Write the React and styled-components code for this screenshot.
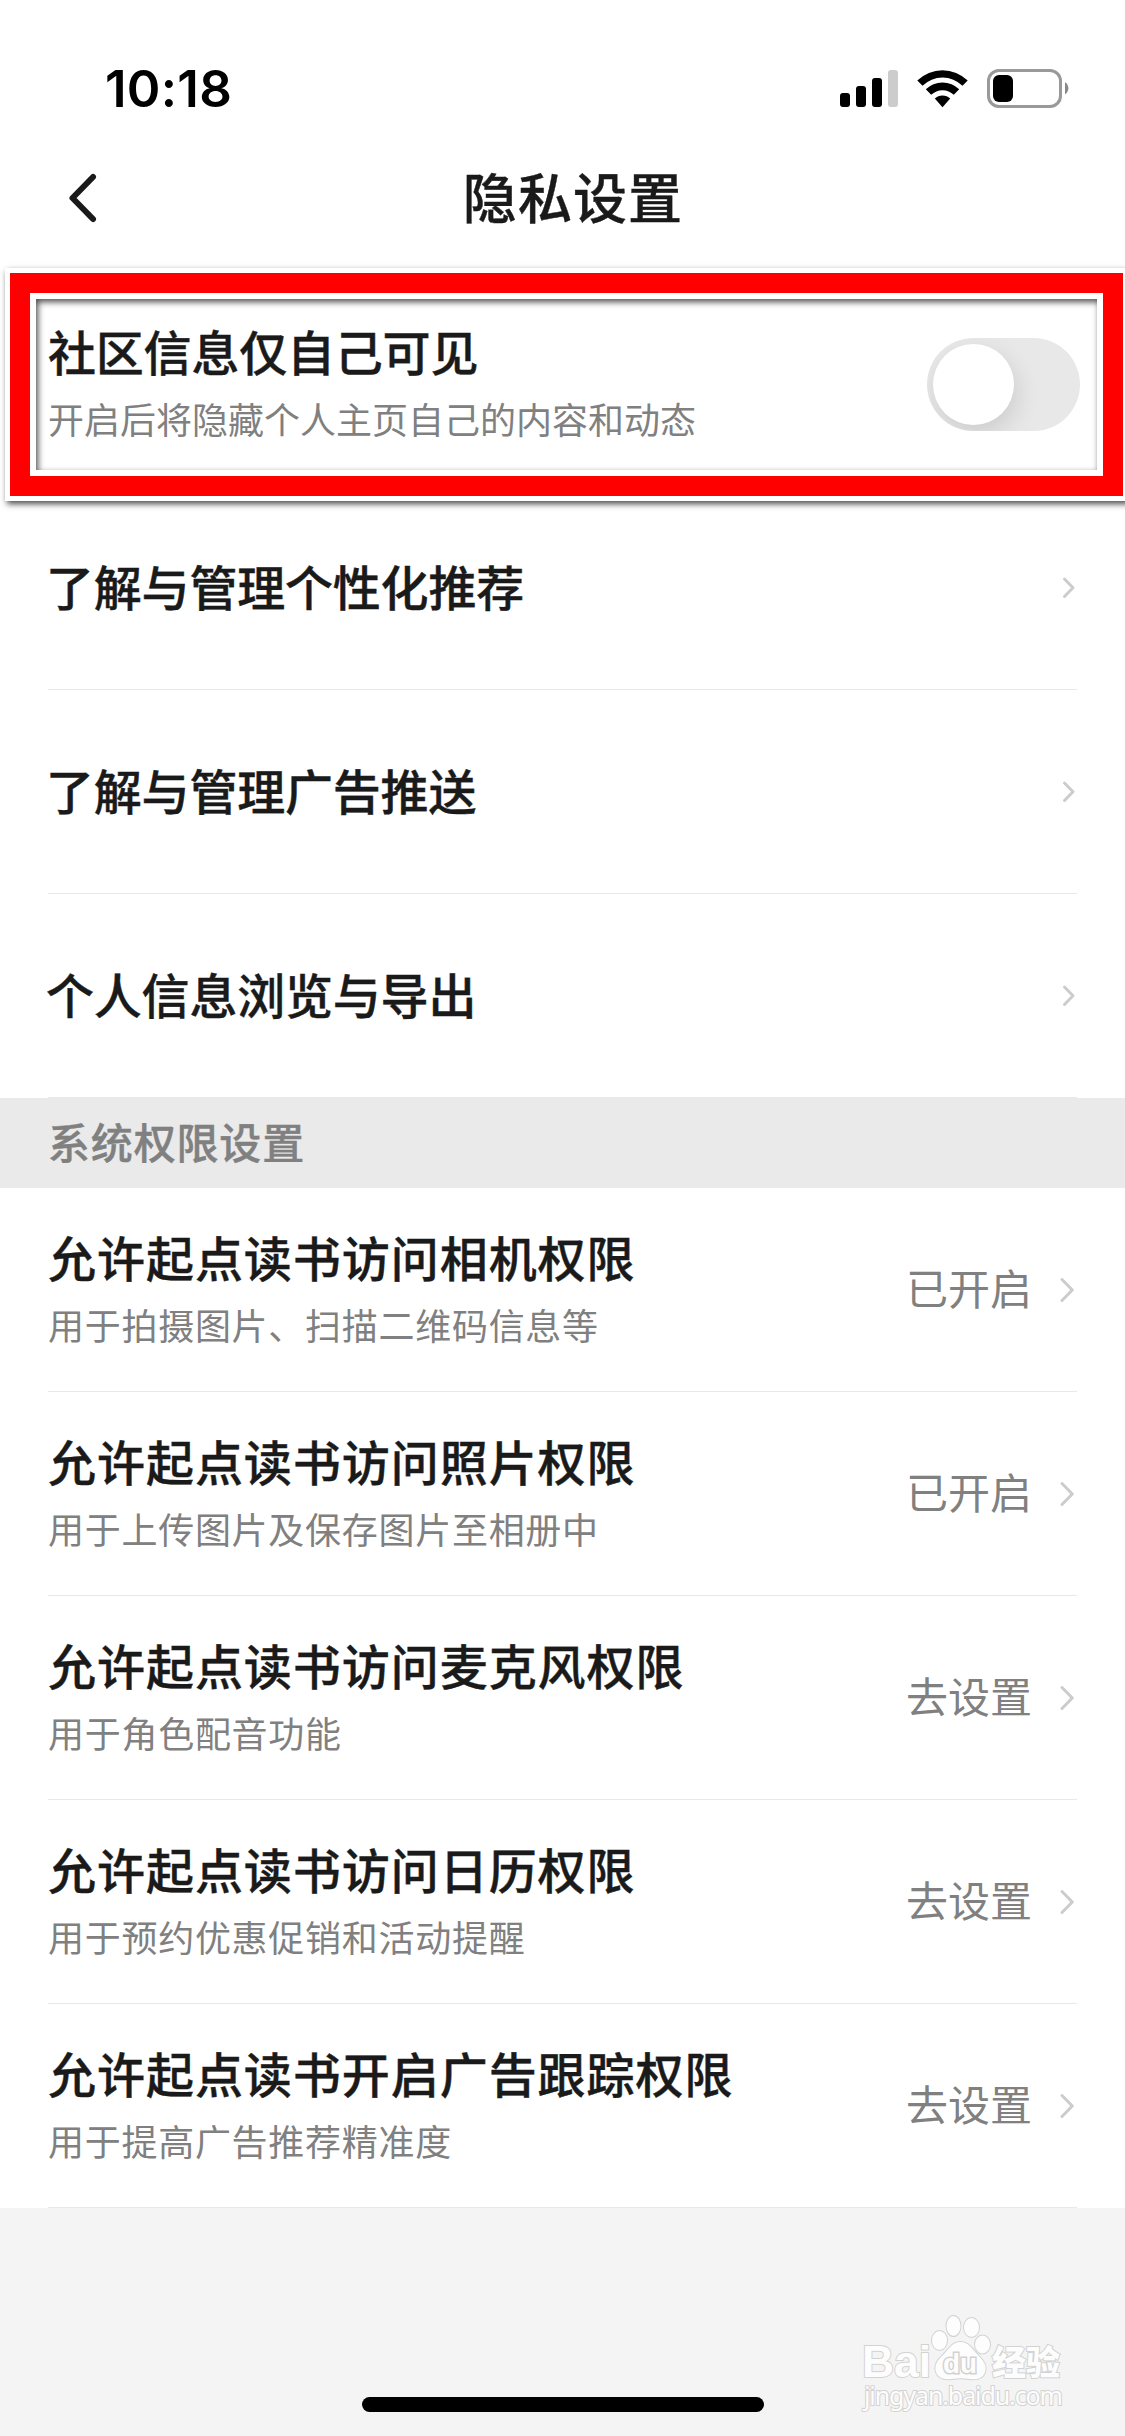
import { useState } from 'react';
import styled, { createGlobalStyle } from 'styled-components';

const GlobalStyle = createGlobalStyle`
  * {
    box-sizing: border-box;
  }
  body {
    margin: 0;
    background: #f4f4f4;
    font-family: 'Noto Sans CJK SC', sans-serif;
    color: #1a1a1a;
  }
`

const Screen = styled.div`
  position: relative;
  display: flex;
  flex-direction: column;
  width: 1125px;
  height: 2436px;
  overflow: hidden;
  background: #f4f4f4;
`

const StatusBar = styled.div`
  display: flex;
  align-items: center;
  justify-content: space-between;
  height: 132px;
  padding: 46px 56px 0 105px;
  background: #fff;
`

const Time = styled.span`
  font-family: 'Inter', sans-serif;
  font-size: 51px;
  font-weight: 600;
  letter-spacing: 0.3px;
  line-height: 86px;
  color: #000;
`

const NavBar = styled.header`
  display: grid;
  grid-template-columns: 160px 1fr 160px;
  align-items: center;
  height: 150px;
  padding: 0 0 18px;
  background: #fff;
`

const BackButton = styled.button`
  display: flex;
  width: 40px;
  margin-left: 63px;
  padding: 0;
  border: 0;
  background: none;
`

const NavTitle = styled.h1`
  margin: 0;
  padding: 0 0 4px 21px;
  font-size: 54px;
  font-weight: 500;
  letter-spacing: 0.02em;
  line-height: 72px;
  text-align: center;
  -webkit-text-stroke: 0.4px;
`

const List = styled.section`
  background: #fff;
`

const Row = styled.div`
  display: flex;
  align-items: center;
  height: 204px;
  margin: 0 48px;
  border-bottom: 1px solid #e8e8e8;
`

const RowText = styled.div`
  flex: 1;
  padding-bottom: 6px;
  margin-left: ${props => props.$shift || '0'};
`

const RowTitle = styled.div`
  font-size: 48px;
  font-weight: 500;
  letter-spacing: ${props => (props.$wide ? '0.02em' : '-0.2px')};
  line-height: 66px;
  -webkit-text-stroke: 0.4px;
`

const RowDesc = styled.div`
  font-size: 36px;
  font-weight: 400;
  letter-spacing: ${props => (props.$wide ? '0.02em' : '0')};
  line-height: 54px;
  padding-top: 8px;
  color: #808080;
`

const RowStatus = styled.span`
  margin-right: 27px;
  padding-bottom: 5px;
  font-size: 42px;
  line-height: 60px;
  color: #808080;
`

const SectionHead = styled.h2`
  display: flex;
  align-items: center;
  height: 90px;
  margin: 0;
  padding: 0 0 6px 48px;
  font-size: 42px;
  font-weight: 500;
  letter-spacing: 0.02em;
  color: #808080;
  background: #eaeaea;
  -webkit-text-stroke: 0.4px;
`

const Switch = styled.button`
  display: flex;
  justify-content: ${props => (props.$on ? 'flex-end' : 'flex-start')};
  width: 153px;
  height: 93px;
  margin: 2px -3px 0 0;
  padding: 6px;
  border: 0;
  border-radius: 47px;
  overflow: hidden;
  background: ${props => (props.$on ? '#e5353e' : '#e8e8e8')};
`

const Knob = styled.span`
  width: 81px;
  height: 81px;
  border-radius: 50%;
  background: #fff;
  box-shadow: 3px 9px 24px rgba(0, 0, 0, 0.12);
`

// red frame laid over the first row
const Highlight = styled.div`
  position: absolute;
  left: 5px;
  top: 268px;
  width: 1123px;
  height: 233px;
  border: 5.5px solid #fff;
  box-shadow: 2px 3px 6px rgba(0, 0, 0, 0.7);
  pointer-events: none;
`

const HighlightRed = styled.div`
  height: 100%;
  border: 20px solid #f00;
`

const HighlightInner = styled.div`
  height: 100%;
  border: 6px solid #fff;
`

const HighlightShade = styled.div`
  height: 100%;
  box-shadow: inset 2px 3px 6px rgba(0, 0, 0, 0.7);
`

const HomeIndicator = styled.div`
  width: 402px;
  height: 15px;
  margin: auto auto 24px 362px;
  border-radius: 8px;
  background: #000;
`

const Watermark = styled.svg`
  position: absolute;
  left: 855px;
  top: 2305px;
`

const StatusIcons = () => (
  <svg width="230" height="40" viewBox="839 69 230 40">
    <rect x="840" y="93" width="10" height="14" rx="3" />
    <rect x="856" y="86" width="10" height="21" rx="3" />
    <rect x="872" y="78" width="10" height="29" rx="3" />
    <rect x="888" y="70" width="10" height="37" rx="3" fill="#ccc" />
    <path d="M917.3 80.5 A36 36 0 0 1 967.7 80.5 L962.5 85.8 A28.5 28.5 0 0 0 922.5 85.8 Z" />
    <path d="M925.8 89.3 A23.7 23.7 0 0 1 959.2 89.3 L953.8 94.8 A16 16 0 0 0 931.2 94.8 Z" />
    <path d="M934.8 98.6 A11 11 0 0 1 950.2 98.6 L942.5 107.3 Z" />
    <rect x="988.5" y="70.5" width="72" height="36" rx="10.5" fill="none" stroke="#999" strokeWidth="3" />
    <rect x="993" y="75" width="20" height="27" rx="6" />
    <path d="M1065 82.3 A7 7 0 0 1 1065 94.3 Z" fill="#888" />
  </svg>
)

const Arrow = ({ small }) => (
  <svg width="18" height="27" viewBox="0 0 18 27">
    <path
      d={small ? 'M5.5 5 L14 13.8 L5.5 22.5' : 'M3 3.5 L13.3 14 L3 24.5'}
      fill="none"
      stroke="#ccc"
      strokeWidth="3"
      strokeLinecap="round"
      strokeLinejoin="round"
    />
  </svg>
)

const BaiduMark = () => (
  <Watermark width="220" height="115" viewBox="855 2305 220 115" fill="#fdfdfd" stroke="#d2d2d2" strokeWidth="2" paintOrder="stroke">
    <text x="862" y="2377" fontFamily="Liberation Sans" fontWeight="700" fontSize="45" textLength="69" lengthAdjust="spacingAndGlyphs">Bai</text>
    <ellipse cx="939.5" cy="2340.5" rx="7.5" ry="9.5" />
    <ellipse cx="953.5" cy="2326" rx="7" ry="10" />
    <ellipse cx="971.5" cy="2327.5" rx="7.5" ry="9.5" />
    <ellipse cx="982.5" cy="2344.5" rx="7.5" ry="9" />
    <path d="M960.5 2342 C969 2342 972 2349 978 2355 C985 2362 987 2367 985 2372 C983 2379 976 2380 969 2379 C963 2378 958 2378 952 2379 C944 2380 938 2378 936 2372 C934 2366 937 2360 943 2355 C949 2349 952 2342 960.5 2342 Z" />
    <text x="943" y="2373" fontFamily="Liberation Sans" fontWeight="700" fontSize="27" textLength="34" lengthAdjust="spacingAndGlyphs" strokeWidth="3">du</text>
    <text x="992" y="2375" fontFamily="Noto Sans CJK SC" fontWeight="900" fontSize="34">经验</text>
    <text x="864" y="2405" fontFamily="Noto Sans" fontSize="25" textLength="199">jingyan.baidu.com</text>
  </Watermark>
)

const links = ['了解与管理个性化推荐', '了解与管理广告推送', '个人信息浏览与导出'];

const permissions = [
  { title: '允许起点读书访问相机权限', desc: '用于拍摄图片、扫描二维码信息等', status: '已开启' },
  { title: '允许起点读书访问照片权限', desc: '用于上传图片及保存图片至相册中', status: '已开启' },
  { title: '允许起点读书访问麦克风权限', desc: '用于角色配音功能', status: '去设置' },
  { title: '允许起点读书访问日历权限', desc: '用于预约优惠促销和活动提醒', status: '去设置' },
  { title: '允许起点读书开启广告跟踪权限', desc: '用于提高广告推荐精准度', status: '去设置' },
];

const App = () => {
  const [onlyMe, setOnlyMe] = useState(false);

  return (
    <Screen>
      <GlobalStyle />
      <StatusBar>
        <Time>10:18</Time>
        <StatusIcons />
      </StatusBar>
      <NavBar>
        <BackButton>
          <svg width="40" height="54" viewBox="0 0 40 54">
            <path d="M30 6 L9.5 27 L30 48" fill="none" stroke="#1a1a1a" strokeWidth="6" strokeLinecap="round" strokeLinejoin="round" />
          </svg>
        </BackButton>
        <NavTitle>隐私设置</NavTitle>
      </NavBar>
      <List>
        <Row>
          <RowText>
            <RowTitle>社区信息仅自己可见</RowTitle>
            <RowDesc>开启后将隐藏个人主页自己的内容和动态</RowDesc>
          </RowText>
          <Switch $on={onlyMe} onClick={() => setOnlyMe(!onlyMe)}><Knob /></Switch>
        </Row>
        {links.map((link) => (
          <Row key={link}>
            <RowText $shift="-2px">
              <RowTitle>{link}</RowTitle>
            </RowText>
            <Arrow small />
          </Row>
        ))}
      </List>
      <SectionHead>系统权限设置</SectionHead>
      <List>
        {permissions.map(({ title, desc, status }) => (
          <Row key={title}>
            <RowText>
              <RowTitle $wide>{title}</RowTitle>
              <RowDesc $wide>{desc}</RowDesc>
            </RowText>
            <RowStatus>{status}</RowStatus>
            <Arrow />
          </Row>
        ))}
      </List>
      <HomeIndicator />
      <Highlight>
        <HighlightRed>
          <HighlightInner>
            <HighlightShade />
          </HighlightInner>
        </HighlightRed>
      </Highlight>
      <BaiduMark />
    </Screen>
  )
}

export default App
